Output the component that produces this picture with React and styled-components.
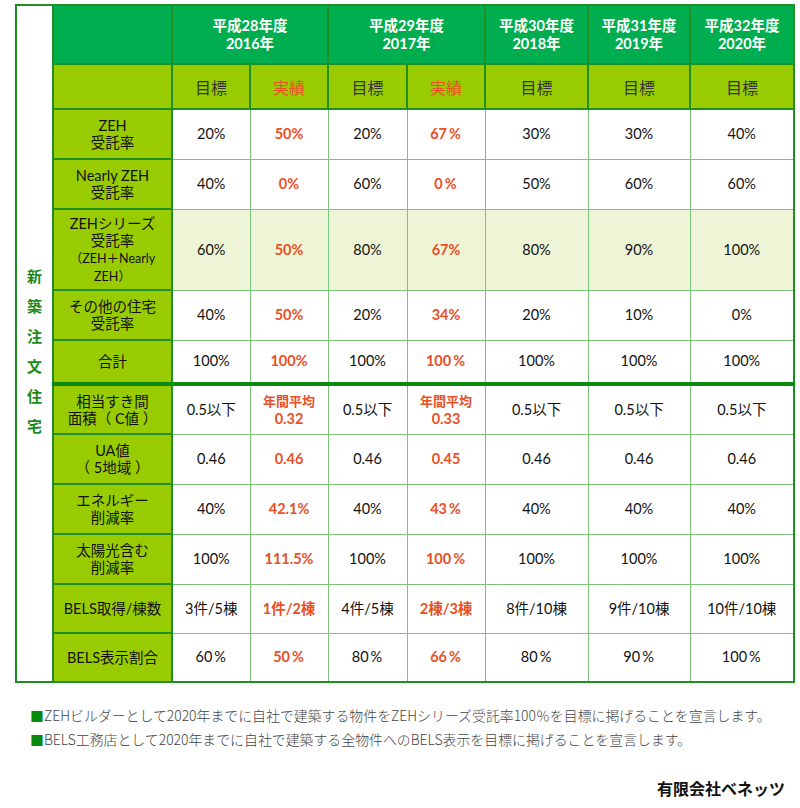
import React from "react";
import styled, { createGlobalStyle } from "styled-components";

const Global = createGlobalStyle`
  html, body { margin: 0; padding: 0; background: #fff; }
  body { font-family: Lato, "Noto Sans CJK JP", sans-serif; color: #222; }
`;

const Page = styled.div`
  width: 800px;
  height: 808px;
  box-sizing: border-box;
  padding: 4px 8px 0 15px;
  display: flex;
  flex-direction: column;
`;

const Table = styled.table`
  border-collapse: collapse;
  table-layout: fixed;
  width: 778px;
  border: 2px solid #1f8f24;
`;

const SideCell = styled.td`
  background: #fff;
  border: 2px solid #1f8f24;
  color: #1a8a1a;
  font-weight: 700;
  font-size: 15px;
  text-align: center;
  vertical-align: middle;
  padding: 14px 0 0 0;
  line-height: 30px;
`;

const YearCell = styled.th`
  background: #00ad4f;
  color: #fff;
  font-weight: 700;
  font-size: 14.5px;
  line-height: 18px;
  border: 2px solid #1f8f24;
  text-align: center;
  vertical-align: middle;
  padding: 0;
`;

const SubCell = styled.th`
  background: #99cc00;
  color: ${(p) => (p.$red ? "#ea4f25" : "#333")};
  font-weight: 400;
  font-size: 16px;
  border: 2px solid #1f8f24;
  text-align: center;
  vertical-align: middle;
  padding: 0;
`;

const LabelCell = styled.th`
  background: #99cc00;
  color: #111;
  font-weight: 400;
  font-size: 14.5px;
  line-height: 17px;
  border: 2px solid #1f8f24;
  ${(p) => (p.$thick ? "border-top: 4px solid #0b8a10;" : "")}
  text-align: center;
  vertical-align: middle;
  padding: 0 2px;
`;

const Small = styled.span`
  font-size: 12.5px;
`;

const DataCell = styled.td`
  background: ${(p) => (p.$hl ? "#eef5d6" : "#fff")};
  color: ${(p) => (p.$red ? "#ea4f25" : "#111")};
  font-weight: ${(p) => (p.$red ? 700 : 400)};
  font-size: 14.5px;
  line-height: 18px;
  border: 1px solid #7cc47c;
  ${(p) => (p.$thick ? "border-top: 4px solid #0b8a10;" : "")}
  text-align: center;
  vertical-align: middle;
  padding: 0;
`;

const Pct = styled.span`
  display: inline-block;
  margin-left: 2px;
  margin-right: 1px;
`;

const SmallRed = styled.span`
  font-size: 13px;
`;

const Notes = styled.div`
  margin-top: 23px;
  padding-left: 15px;
  display: flex;
  flex-direction: column;
  gap: 6px;
  color: #444;
  font-size: 13.9px;
  line-height: 18px;
  font-family: "Noto Sans CJK JP", sans-serif;
  font-weight: 300;
`;

const Mark = styled.span`
  color: #0a8a0a;
`;

const Company = styled.div`
  margin-top: 28px;
  align-self: flex-end;
  margin-right: 7px;
  font-size: 16px;
  font-weight: 700;
  color: #111;
  font-family: "Noto Sans CJK JP", sans-serif;
`;

const heights = [50, 50, 81, 50, 44, 50, 50, 50, 50, 49, 49];

const rows = [
  { label: ["ZEH", "受託率"], v: ["20%", "50%", "20%", "67％", "30%", "30%", "40%"] },
  { label: ["Nearly ZEH", "受託率"], v: ["40%", "0%", "60%", "0％", "50%", "60%", "60%"] },
  {
    label: ["ZEHシリーズ", "受託率", <Small key="a">（ZEH＋Nearly</Small>, <Small key="b">ZEH）</Small>],
    v: ["60%", "50%", "80%", "67%", "80%", "90%", "100%"],
    hl: true,
  },
  { label: ["その他の住宅", "受託率"], v: ["40%", "50%", "20%", "34%", "20%", "10%", "0%"] },
  { label: ["合計"], v: ["100%", "100%", "100%", "100％", "100%", "100%", "100%"] },
  {
    label: ["相当すき間", "面積（ C値 ）"],
    v: ["0.5以下", ["年間平均", "0.32"], "0.5以下", ["年間平均", "0.33"], "0.5以下", "0.5以下", "0.5以下"],
    thick: true,
  },
  { label: ["UA値", "（ 5地域 ）"], v: ["0.46", "0.46", "0.46", "0.45", "0.46", "0.46", "0.46"] },
  { label: ["エネルギー", "削減率"], v: ["40%", "42.1%", "40%", "43％", "40%", "40%", "40%"] },
  { label: ["太陽光含む", "削減率"], v: ["100%", "111.5%", "100%", "100％", "100%", "100%", "100%"] },
  { label: ["BELS取得/棟数"], v: ["3件/5棟", "1件/2棟", "4件/5棟", "2棟/3棟", "8件/10棟", "9件/10棟", "10件/10棟"] },
  { label: ["BELS表示割合"], v: ["60％", "50％", "80％", "66％", "80％", "90％", "100％"] },
];

const cols = [37, 119, 78, 78, 79, 78, 103, 102, 104];

const lines = (arr) =>
  arr.map((t, i) => (
    <React.Fragment key={i}>
      {i > 0 && <br />}
      {t}
    </React.Fragment>
  ));

const renderValue = (s) =>
  s.endsWith("％") ? (
    <>
      {s.slice(0, -1)}
      <Pct>%</Pct>
    </>
  ) : (
    s
  );

export default function App() {
  return (
    <>
      <Global />
      <Page>
        <Table>
          <colgroup>
            {cols.map((w, i) => (
              <col key={i} style={{ width: w }} />
            ))}
          </colgroup>
          <tbody>
            <tr style={{ height: 59 }}>
              <SideCell rowSpan={13}>
                新<br />築<br />注<br />文<br />住<br />宅
              </SideCell>
              <YearCell />
              <YearCell colSpan={2}>平成28年度<br />2016年</YearCell>
              <YearCell colSpan={2}>平成29年度<br />2017年</YearCell>
              <YearCell>平成30年度<br />2018年</YearCell>
              <YearCell>平成31年度<br />2019年</YearCell>
              <YearCell>平成32年度<br />2020年</YearCell>
            </tr>
            <tr style={{ height: 45 }}>
              <SubCell />
              <SubCell>目標</SubCell>
              <SubCell $red>実績</SubCell>
              <SubCell>目標</SubCell>
              <SubCell $red>実績</SubCell>
              <SubCell>目標</SubCell>
              <SubCell>目標</SubCell>
              <SubCell>目標</SubCell>
            </tr>
            {rows.map((r, ri) => (
              <tr key={ri} style={{ height: heights[ri] }}>
                <LabelCell $thick={r.thick}>{lines(r.label)}</LabelCell>
                {r.v.map((v, ci) => {
                  const red = ci === 1 || ci === 3;
                  return (
                    <DataCell key={ci} $red={red} $hl={r.hl} $thick={r.thick}>
                      {Array.isArray(v) ? (
                        <>
                          <SmallRed>{v[0]}</SmallRed>
                          <br />
                          {v[1]}
                        </>
                      ) : (
                        renderValue(v)
                      )}
                    </DataCell>
                  );
                })}
              </tr>
            ))}
          </tbody>
        </Table>
        <Notes>
          <div>
            <Mark>■</Mark>ZEHビルダーとして2020年までに自社で建築する物件をZEHシリーズ受託率100％を目標に掲げることを宣言します。
          </div>
          <div>
            <Mark>■</Mark>BELS工務店として2020年までに自社で建築する全物件へのBELS表示を目標に掲げることを宣言します。
          </div>
        </Notes>
        <Company>有限会社ベネッツ</Company>
      </Page>
    </>
  );
}
